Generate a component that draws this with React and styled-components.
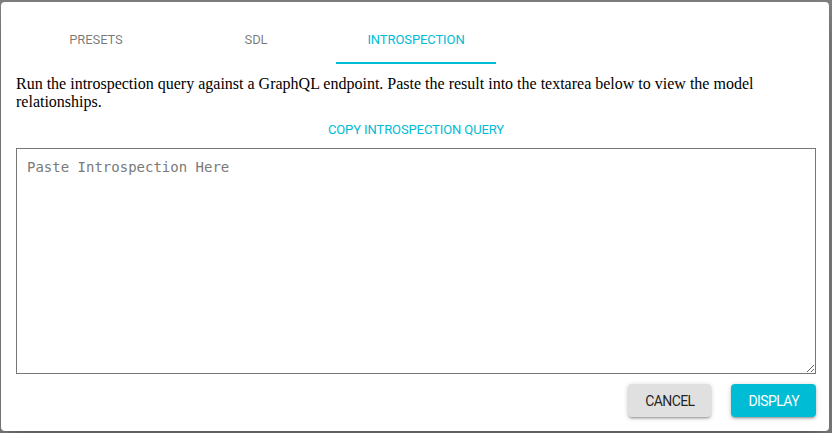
import React, { useState } from 'react'
import styled, { createGlobalStyle } from 'styled-components'

const GlobalStyle = createGlobalStyle`
    html, body {
        margin: 0;
        padding: 0;
        background: #7f7f7f;
    }
    * {
        box-sizing: border-box;
    }
`

const tabs = ['Presets', 'SDL', 'Introspection']

const Dialog = styled.div`
    margin: 2px 3px 2px 1px;
    height: 429px;
    background: #fff;
    border-radius: 4px;
    box-shadow: 0 11px 15px -7px rgba(0,0,0,0.2), 0 24px 38px 3px rgba(0,0,0,0.14);
    padding: 14px 12px 0 15px;
    display: flex;
    flex-direction: column;
    font-family: Roboto, 'Liberation Sans', sans-serif;
`

const TabBar = styled.div`
    display: flex;
    height: 48px;
`

const Tab = styled.button`
    width: 160px;
    height: 48px;
    border: none;
    background: none;
    padding: 0;
    font-family: Roboto, sans-serif;
    font-size: 13px;
    font-weight: 400;
    letter-spacing: -0.1px;
    text-transform: uppercase;
    color: ${p => (p.$active ? '#00bcd4' : 'rgba(0,0,0,0.54)')};
    border-bottom: 2px solid ${p => (p.$active ? '#00bcd4' : 'transparent')};
    cursor: pointer;
`

const Intro = styled.p`
    margin: 11px 0 0;
    font-family: 'Liberation Serif', serif;
    font-size: 16px;
    line-height: 18px;
    color: #000;
`

const CopyRow = styled.div`
    display: flex;
    justify-content: center;
    width: 800px;
`

const TextButton = styled.button`
    height: 36px;
    padding: 0 8px;
    border: none;
    background: none;
    color: #00bcd4;
    font-family: Roboto, sans-serif;
    font-size: 13px;
    font-weight: 400;
    letter-spacing: -0.1px;
    text-transform: uppercase;
    cursor: pointer;
`

const Paste = styled.textarea`
    display: block;
    width: 800px;
    height: 226px;
    margin-top: 1px;
    padding: 10px 10px;
    border: 1px solid #767676;
    border-radius: 0;
    font-family: 'DejaVu Sans Mono', monospace;
    font-size: 14px;
    resize: vertical;
    outline: none;
    &::placeholder {
        color: #7a7a7a;
    }
`

const Actions = styled.div`
    display: flex;
    justify-content: flex-end;
    gap: 20px;
    width: 800px;
    margin-top: 10px;
`

const ActionButton = styled.button`
    height: 33px;
    padding: 0 17px;
    border: none;
    border-radius: 4px;
    font-family: Roboto, sans-serif;
    font-size: 14px;
    font-weight: 400;
    letter-spacing: -0.6px;
    text-transform: uppercase;
    background: ${p => (p.$primary ? '#00bcd4' : '#e0e0e0')};
    color: ${p => (p.$primary ? '#fff' : 'rgba(0,0,0,0.87)')};
    box-shadow: 0 1px 5px rgba(0,0,0,0.2), 0 2px 2px rgba(0,0,0,0.14), 0 3px 1px -2px rgba(0,0,0,0.12);
    cursor: pointer;
`

const App = () => {
    const [active, setActive] = useState(2)
    return (
        <>
            <GlobalStyle />
            <Dialog>
                <TabBar>
                    {tabs.map((t, i) => (
                        <Tab key={t} $active={i === active} onClick={() => setActive(i)}>{t}</Tab>
                    ))}
                </TabBar>
                <Intro>
                    Run the introspection query against a GraphQL endpoint. Paste the result into the textarea below to view the model relationships.
                </Intro>
                <CopyRow>
                    <TextButton>Copy Introspection Query</TextButton>
                </CopyRow>
                <Paste placeholder='Paste Introspection Here' />
                <Actions>
                    <ActionButton>Cancel</ActionButton>
                    <ActionButton $primary>Display</ActionButton>
                </Actions>
            </Dialog>
        </>
    )
}

export default App
